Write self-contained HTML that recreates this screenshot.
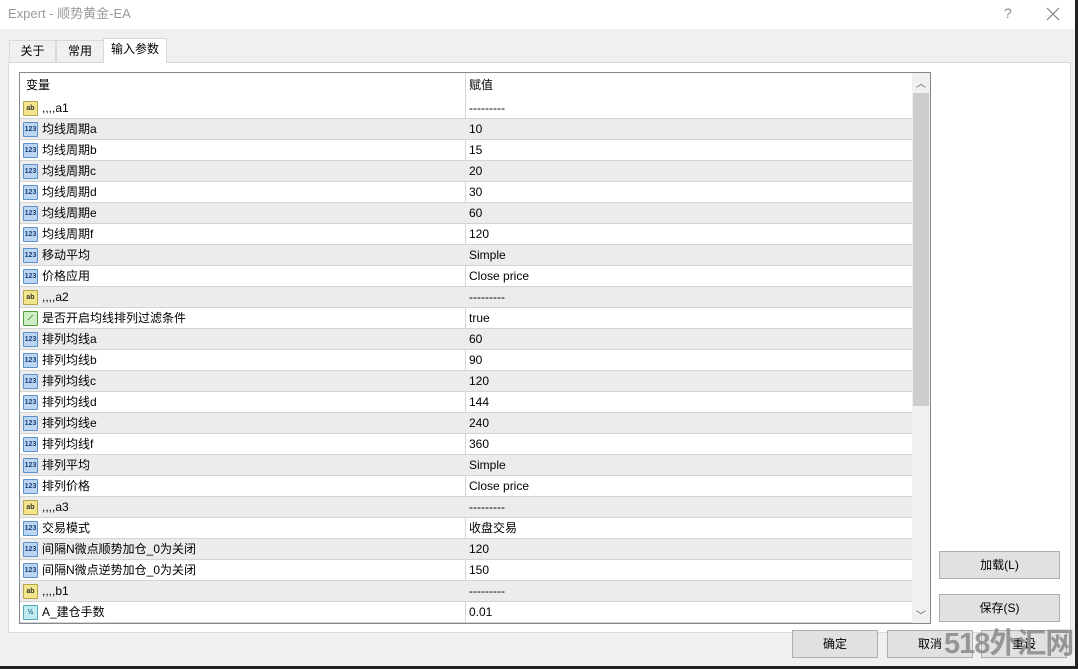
<!DOCTYPE html>
<html><head><meta charset="utf-8"><style>
*{box-sizing:border-box;margin:0;padding:0}
html,body{width:1078px;height:669px;overflow:hidden}
body{background:#f0f0f0;font-family:"Liberation Sans","Noto Sans CJK SC",sans-serif;font-size:12px;color:#000;position:relative}
.abs{position:absolute}
.title{left:0;top:0;width:1075px;height:29px;background:#fff;color:#999;font-size:13px;line-height:28px;padding-left:8px}
.rb{left:1075px;top:0;width:3px;height:669px;background:#222}
.bb{left:0;top:666px;width:1078px;height:3px;background:#222}
.tab{top:40px;height:22px;border:1px solid #d9d9d9;border-bottom:none;background:#f0f0f0;line-height:20px;text-align:center}
.panel{left:8px;top:62px;width:1063px;height:571px;background:#fff;border:1px solid #d9d9d9}
.tbl{left:19px;top:72px;width:912px;height:552px;border:1px solid #828790;background:#fff;overflow:hidden}
.row{position:absolute;left:0;width:892px;height:21px;border-bottom:1px solid #d4d4d4;line-height:20px}
.row.g{background:#ececec}
.c1{position:absolute;left:22px}
.c2{position:absolute;left:449px}
.div{position:absolute;left:445px;top:0;width:1px;height:552px;background:#d4d4d4}
.ic{position:absolute;left:3px;top:3px;width:15px;height:15px;border-radius:1px;font-size:7px;line-height:13px;text-align:center;font-weight:bold}
.ab{background:#f2e58c;border:1px solid #b8a24a;color:#333}
.n{background:#bcd6f2;border:1px solid #5d8fc9;color:#1a3f7a}
.f{background:#c0ebf0;border:1px solid #55a8b8;color:#1a5f7a}
.b{background:#cdeec2;border:1px solid #4f9d3f;color:#2a6a1a}
.btn{height:28px;background:#e1e1e1;border:1px solid #adadad;text-align:center;line-height:26px}
</style></head><body>
<div class="abs title">Expert - 顺势黄金-EA</div>
<div class="abs" style="left:1004px;top:5px;color:#888;font-size:14px">?</div>
<svg class="abs" style="left:1046px;top:7px" width="14" height="14"><path d="M1 1L13 13M13 1L1 13" stroke="#777" stroke-width="1"/></svg>
<div class="abs rb"></div>
<div class="abs panel"></div>
<div class="abs tab" style="left:9px;width:47px">关于</div>
<div class="abs tab" style="left:56px;width:48px">常用</div>
<div class="abs tab" style="left:103px;width:64px;top:38px;height:25px;background:#fff">输入参数</div>
<div class="abs tbl">
<div class="row" style="top:0;height:25px;line-height:24px;border-bottom:none"><span class="c1" style="left:6px">变量</span><span class="c2">赋值</span></div>
<div class="div"></div>
<div id="rows"></div>
<div style="position:absolute;left:892px;top:0;width:18px;height:552px;background:#f0f0f0"></div>
<div style="position:absolute;left:893px;top:20px;width:16px;height:313px;background:#cdcdcd"></div>
<div style="position:absolute;left:896px;top:2px;font-size:10px;color:#555">︿</div>
<div style="position:absolute;left:896px;top:534px;font-size:10px;color:#555">﹀</div>
</div>
<script>
var d=[["ab",",,,,a1","---------"],["n","均线周期a","10"],["n","均线周期b","15"],["n","均线周期c","20"],["n","均线周期d","30"],["n","均线周期e","60"],["n","均线周期f","120"],["n","移动平均","Simple"],["n","价格应用","Close price"],["ab",",,,,a2","---------"],["b","是否开启均线排列过滤条件","true"],["n","排列均线a","60"],["n","排列均线b","90"],["n","排列均线c","120"],["n","排列均线d","144"],["n","排列均线e","240"],["n","排列均线f","360"],["n","排列平均","Simple"],["n","排列价格","Close price"],["ab",",,,,a3","---------"],["n","交易模式","收盘交易"],["n","间隔N微点顺势加仓_0为关闭","120"],["n","间隔N微点逆势加仓_0为关闭","150"],["ab",",,,,b1","---------"],["f","A_建仓手数","0.01"]];
var h="";var lbl={ab:"ab",n:"123",f:"½",b:"⟋"};
d.forEach(function(r,i){h+='<div class="row'+(i%2?' g':'')+'" style="top:'+(25+i*21)+'px"><span class="ic '+r[0]+'">'+lbl[r[0]]+'</span><span class="c1">'+r[1]+'</span><span class="c2">'+r[2]+'</span></div>';});
document.getElementById("rows").innerHTML=h;
</script>
<div class="abs btn" style="left:939px;top:551px;width:121px">加载(L)</div>
<div class="abs btn" style="left:939px;top:594px;width:121px">保存(S)</div>
<div class="abs btn" style="left:792px;top:630px;width:86px">确定</div>
<div class="abs btn" style="left:887px;top:630px;width:86px">取消</div>
<div class="abs btn" style="left:981px;top:630px;width:86px">重设</div>
<div class="abs" style="left:944px;top:626px;width:130px;white-space:nowrap;font-size:29px;line-height:36px;font-weight:bold;color:#8a8a8a;opacity:.85;letter-spacing:-1px">518外汇网</div>
<div class="abs bb"></div>
</body></html>
